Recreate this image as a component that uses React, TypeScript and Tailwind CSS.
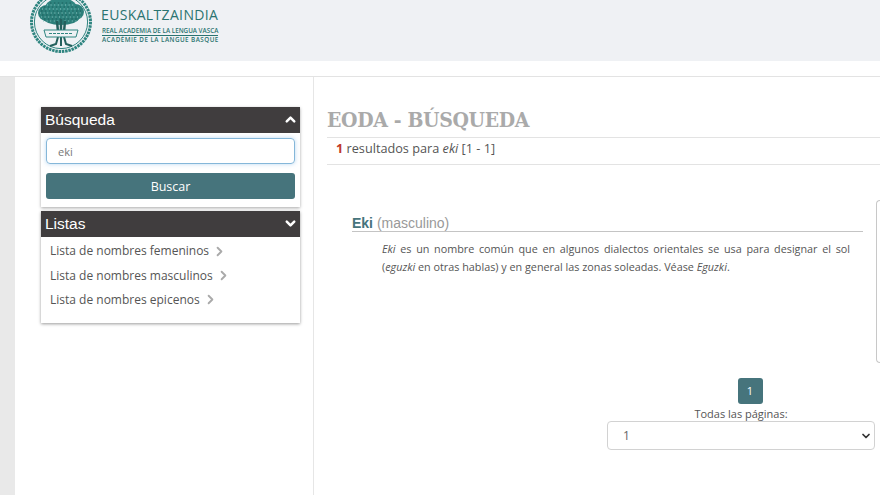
import { ChevronRight, ChevronUp, ChevronDown } from 'lucide-react'

const listas = ['Lista de nombres femeninos', 'Lista de nombres masculinos', 'Lista de nombres epicenos']

const Seal = () => (
  <svg width="64" height="58" viewBox="0 0 64 58" className="shrink-0">
    <circle cx="32" cy="23" r="29.5" fill="#eef1f4" stroke="#2f8580" strokeWidth="3" strokeDasharray="2.5 0.8" />
    <circle cx="32" cy="23" r="26.6" fill="none" stroke="#2f8580" strokeWidth="1" />
    <ellipse cx="18" cy="14" rx="9" ry="8" fill="#2c7f7a" />
    <ellipse cx="46" cy="13" rx="9" ry="8" fill="#2c7f7a" />
    <ellipse cx="32" cy="9" rx="16" ry="10" fill="#2f8580" />
    <ellipse cx="32" cy="19" rx="18" ry="7" fill="#2c7f7a" />
    <path d="M11 14 H53 M12 18 H52 M14 22 H50 M13 10 H51 M18 6 H46" fill="none" stroke="#8cc4c0" strokeWidth="1" strokeDasharray="1 2.6" />
    <path d="M12 12 H52 M13 16 H51 M15 20 H49 M15 8 H49 M21 4 H43" fill="none" stroke="#1d5f5c" strokeWidth="1" strokeDasharray="1.5 2.4" />
    <path d="M28 22 L29 33 M36 22 L35 33 M32 20 L32 33" fill="none" stroke="#24605d" strokeWidth="2.5" />
    <path d="M29 38 L27 45 L21 47 M35 38 L37 45 L43 47 M32 38 L32 47" fill="none" stroke="#24605d" strokeWidth="2" />
    <path d="M15 31 L49 31 L47 38 L17 38 Z" fill="#eef1f4" stroke="#2f8580" strokeWidth="1" />
    <path d="M20 34.5 H44" stroke="#2f8580" strokeWidth="1.2" strokeDasharray="3 1" />
  </svg>
)

const PanelHeader = ({ title, open }: { title: string; open: boolean }) => (
  <div className="flex h-[26px] items-center justify-between bg-[#403d3e] pb-px pl-1 pr-[2px] font-['Liberation_Sans',sans-serif] text-[15.5px] text-white">
    <span>{title}</span>
    {open ? <ChevronUp size={15} strokeWidth={4} /> : <ChevronDown size={15} strokeWidth={4} />}
  </div>
)

const App = () => {
  return (
    <div className="h-[495px] w-[880px] overflow-hidden bg-white font-['Open_Sans',sans-serif] text-[12px] text-[#555]">
      <header className="flex h-[61px] items-start gap-[8px] overflow-hidden bg-[#eff1f4] pl-[29px]">
        <div className="-mt-[1px]">
          <Seal />
        </div>
        <div className="pt-[6px] text-[#2a7470]">
          <div className="text-[14px] leading-[18px] tracking-[0.35px]">EUSKALTZAINDIA</div>
          <div className="mt-[3px] ml-px w-fit border-b border-[#2a7470] text-[6.3px] font-semibold leading-[8px]">REAL ACADEMIA DE LA LENGUA VASCA</div>
          <div className="ml-px text-[6.3px] font-semibold leading-[7.5px] tracking-[0.45px]">ACADÉMIE DE LA LANGUE BASQUE</div>
        </div>
      </header>

      <div className="mt-[15px] flex h-[419px] border-t border-[#e3e3e3]">
        <div className="w-[15px] shrink-0 bg-[#e9e9e9]" />

        <aside className="w-[299px] shrink-0 border-r border-[#e6e6e6] pl-[26px] pr-[13px] pt-[30px]">
          <section className="h-[100px] bg-white shadow-[0_1px_3px_rgba(0,0,0,0.35)]">
            <PanelHeader title="Búsqueda" open />
            <div className="px-[5px] pt-[5px]">
              <input
                readOnly
                value="eki"
                className="block h-[26px] w-full rounded border border-[#85b7d9] pl-[11px] text-[11px] text-[#777] shadow-[0_0_4px_rgba(120,180,230,0.5)] outline-none"
              />
              <button className="mt-[9px] block h-[26px] w-full rounded-[3px] bg-[#46747c] pt-[2px] text-[12.5px] text-white">
                Buscar
              </button>
            </div>
          </section>

          <section className="mt-[4px] h-[112px] bg-white shadow-[0_1px_3px_rgba(0,0,0,0.4)]">
            <PanelHeader title="Listas" open={false} />
            <ul className="pl-[9px] pt-[2px]">
              {listas.map((l) => (
                <li key={l} className="flex h-[24.4px] items-center gap-[3px]">
                  {l}
                  <ChevronRight size={15} strokeWidth={3} className="text-[#aaa]" />
                </li>
              ))}
            </ul>
          </section>
        </aside>

        <main className="min-w-0 flex-1 pl-[13px] pt-[26px]">
          <h1 className="h-[35px] border-b border-[#e3e3e3] font-['DejaVu_Serif',serif] text-[21px] font-bold leading-[33px] tracking-[-0.35px] text-[#aaaaaa] [font-stretch:condensed]">
            EODA - BÚSQUEDA
          </h1>
          <p className="h-[27px] border-b border-[#e3e3e3] pl-[9px] text-[12.7px] leading-[21px]">
            <b className="text-[#c0392b]">1</b> resultados para <i>eki</i> [1 - 1]
          </p>

          <div className="flex">
            <div className="min-w-0 flex-1 pl-[25px] pt-[50px]">
              <h2 className="h-[17px] border-b border-[#c4c4c4] font-['Liberation_Sans',sans-serif] text-[14px] leading-[16px] text-[#999]">
                <b className="text-[#46747c]">Eki</b> (masculino)
              </h2>
              <p className="mt-[8px] pl-[30px] pr-[13px] text-justify text-[10.8px] leading-[18px]">
                <i>Eki</i> es un nombre común que en algunos dialectos orientales se usa para designar el sol (<i>eguzki</i> en otras hablas) y en general las zonas soleadas. Véase <i>Eguzki</i>.
              </p>
            </div>
            <div className="ml-[13px] mt-[35px] h-[163px] w-[4px] rounded-l-md border-y border-l border-[#c8c8c8]" />
          </div>

          <div className="ml-[280px] mt-[15px] flex w-[268px] flex-col items-center">
            <span className="ml-[18px] flex h-[26px] w-[25px] items-center justify-center rounded-[3px] bg-[#46747c] text-[11px] text-white">
              1
            </span>
            <span className="mt-[2px] text-[11px] leading-[15px]">Todas las páginas:</span>
            <div className="flex h-[29px] w-full items-center justify-between rounded border border-[#d2d2d2] pl-[15px] pr-[2px] text-[#666]">
              1
              <ChevronDown size={12} strokeWidth={3.5} className="text-[#333]" />
            </div>
          </div>
        </main>
      </div>
    </div>
  )
}

export default App
